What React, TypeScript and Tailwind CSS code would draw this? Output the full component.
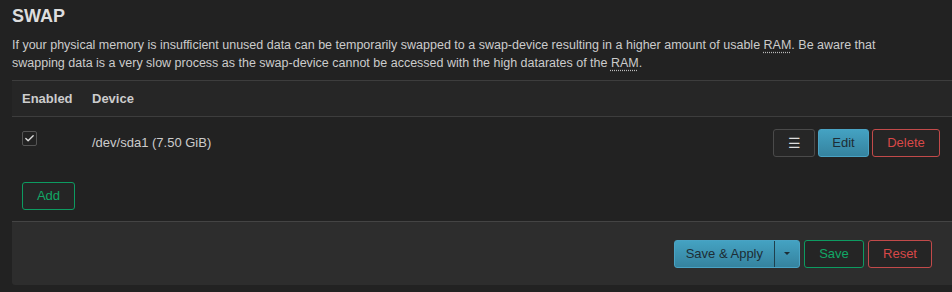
import { Check } from "lucide-react";

const App = () => {
  return (
    <div
      className="w-[952px] h-[292px] overflow-hidden bg-[#222222] text-[#cccccc] pl-[12px]"
      style={{ fontFamily: '"Liberation Sans", Arial, sans-serif' }}
    >
      <h2 className="pt-[5px] text-[18px] leading-[22px] font-bold text-[#dddddd]">SWAP</h2>
      <p className="mt-[9px] text-[12.5px] leading-[18px] text-[#cccccc] pr-[50px]">
        If your physical memory is insufficient unused data can be temporarily swapped to a swap-device resulting in a
        higher amount of usable{" "}
        <abbr className="underline decoration-dotted underline-offset-[3px] decoration-[#bbb]">RAM</abbr>. Be aware that
        swapping data is a very slow process as the swap-device cannot be accessed with the high datarates of the{" "}
        <abbr className="underline decoration-dotted underline-offset-[3px] decoration-[#bbb]">RAM</abbr>.
      </p>

      <div className="mt-[8px]">
        <div className="flex h-[37px] items-center bg-[#262626] border-t border-b border-[#3d3d3d] text-[13px] font-bold text-[#cccccc]">
          <div className="w-[80px] pl-[10px]">Enabled</div>
          <div>Device</div>
        </div>
        <div className="flex h-[52px] items-center">
          <div className="w-[80px] pl-[10px] self-start pt-[14px]">
            <div className="w-[15px] h-[15px] rounded-[2px] border border-[#555] flex items-center justify-center">
              <Check size={11} strokeWidth={3} className="text-[#dddddd]" />
            </div>
          </div>
          <div className="text-[13px] text-[#cccccc] self-start pt-[16px]">/dev/sda1 (7.50 GiB)</div>
          <div className="ml-auto mr-[12px] flex gap-[3px] -mt-[1px]">
            <button className="w-[42px] h-[28px] rounded-[3px] border border-[#4a4a4a] bg-[#262626] text-[#dddddd] text-[14px] leading-none">
              ☰
            </button>
            <button className="w-[51px] h-[28px] rounded-[3px] border border-[#4aa3c4] bg-gradient-to-b from-[#44a2c2] to-[#35839f] text-[#1d2d35] text-[13px]">
              Edit
            </button>
            <button className="w-[68px] h-[28px] rounded-[3px] border border-[#c24a4a] bg-[#252525] text-[#d84848] text-[13px]">
              Delete
            </button>
          </div>
        </div>
        <div className="pl-[10px] pt-[13px] h-[52px]">
          <button className="w-[53px] h-[28px] rounded-[3px] border border-[#0d9b61] bg-[#252525] text-[#11a866] text-[13px]">
            Add
          </button>
        </div>
        <div className="h-[64px] bg-[#2d2d2d] border-t border-[#444444] rounded-bl-[3px] flex items-center justify-end pr-[20px] gap-[4px]">
          <div className="flex h-[28px] rounded-[3px] border border-[#4aa3c4] bg-gradient-to-b from-[#44a2c2] to-[#35839f] text-[#1d2d35] text-[13px] overflow-hidden">
            <button className="px-[11px] border-r border-[#1f3f4c]">Save &amp; Apply</button>
            <button className="w-[24px] flex items-center justify-center">
              <span className="block w-0 h-0 border-l-[3px] border-r-[3px] border-t-[3px] border-l-transparent border-r-transparent border-t-[#1d2d35]" />
            </button>
          </div>
          <button className="w-[60px] h-[28px] rounded-[3px] border border-[#0d9b61] bg-[#252525] text-[#11a866] text-[13px]">
            Save
          </button>
          <button className="w-[64px] h-[28px] rounded-[3px] border border-[#c24a4a] bg-[#252525] text-[#d84848] text-[13px]">
            Reset
          </button>
        </div>
      </div>
    </div>
  );
};

export default App;
